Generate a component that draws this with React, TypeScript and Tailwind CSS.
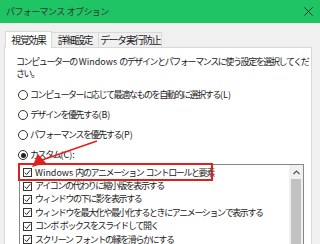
import React from "react";

const F = { fontFamily: '"Noto Sans CJK JP", "Noto Sans", sans-serif' };

function T({ s }: { s: string }) {
  const parts = s.split(/([\x20-\x7e]+)/).filter((p) => p.length > 0);
  return (
    <>
      {parts.map((p, i) =>
        /^[\x20-\x7e]+$/.test(p) ? (
          <span key={i} className="tracking-[0px] whitespace-pre">
            {p}
          </span>
        ) : (
          <span key={i}>{p}</span>
        )
      )}
    </>
  );
}

function Radio({ checked, label }: { checked?: boolean; label: string }) {
  return (
    <div className="flex items-center h-[20px] pl-[2px]">
      <span className="w-[10px] h-[10px] rounded-full border border-[#333] bg-white flex items-center justify-center shrink-0">
        {checked && <span className="w-[5px] h-[5px] rounded-full bg-[#222]" />}
      </span>
      <span className="ml-[2px] whitespace-nowrap">
        <T s={label} />
      </span>
    </div>
  );
}

function Check({ label }: { label: string }) {
  return (
    <div className="flex items-center h-[13.4px] pl-[2px]">
      <span className="w-[9px] h-[9px] border border-[#333] bg-white flex items-center justify-center shrink-0">
        <svg width="7" height="7" viewBox="0 0 7 7">
          <path d="M0.8 3.6 L2.7 5.5 L6.2 1.2" stroke="#222" strokeWidth="1" fill="none" />
        </svg>
      </span>
      <span className="ml-[3px] whitespace-nowrap">
        <T s={label} />
      </span>
    </div>
  );
}

export default function App() {
  const items = [
    "Windows 内のアニメーション コントロールと要素",
    "アイコンの代わりに縮小版を表示する",
    "ウィンドウの下に影を表示する",
    "ウィンドウを最大化や最小化するときにアニメーションで表示する",
    "コンボ ボックスをスライドして開く",
    "スクリーン フォントの縁を滑らかにする",
  ];
  return (
    <div
      className="relative w-[320px] h-[244px] overflow-hidden bg-[#f0f0f0] flex flex-col text-[9px] tracking-[-1.4px] text-[#1a1a1a] leading-[12px]"
      style={F}
    >
      <div className="h-[23px] bg-[#1fc465] flex items-center justify-between pl-[6px] pr-[7px] shrink-0">
        <span className="text-[9px] tracking-[-0.6px] text-[#2a3a30] whitespace-nowrap">
          <T s="パフォーマンス オプション" />
        </span>
        <svg width="9" height="9" viewBox="0 0 9 9">
          <path d="M0.5 0.5 L8.5 8.5 M8.5 0.5 L0.5 8.5" stroke="#1a2a20" strokeWidth="1" />
        </svg>
      </div>
      <div className="h-[24px] flex items-end pl-[5px] shrink-0">
        <div className="h-[17px] w-[47px] bg-white border border-b-0 border-[#d9d9d9] flex items-center justify-center text-[10px] relative top-[1px] z-10 whitespace-nowrap">
          視覚効果
        </div>
        <div className="h-[15px] w-[47px] border-t border-r border-[#d9d9d9] flex items-center justify-center text-[10px] whitespace-nowrap">
          詳細設定
        </div>
        <div className="h-[15px] w-[63px] border-t border-r border-[#d9d9d9] flex items-center justify-center text-[10px] whitespace-nowrap">
          データ実行防止
        </div>
      </div>
      <div className="ml-[4px] w-[308px] flex-1 bg-white border border-[#d9d9d9] pl-[11px] pt-[8px] flex flex-col">
        <div className="leading-[12px]">
          <div className="whitespace-nowrap">
            <T s="コンピューターの Windows のデザインとパフォーマンスに使う設定を選択してくだ" />
          </div>
          <div>さい。</div>
        </div>
        <div className="mt-[5px] flex flex-col">
          <Radio label="コンピューターに応じて最適なものを自動的に選択する(L)" />
          <Radio label="デザインを優先する(B)" />
          <Radio label="パフォーマンスを優先する(P)" />
          <Radio checked label="カスタム(C):" />
        </div>
        <div className="ml-[3px] w-[285px] flex-1 border border-[#828790] flex -mt-[1px]">
          <div className="flex-1 pt-[1px] pl-[1px] flex flex-col">
            {items.map((t) => (
              <Check key={t} label={t} />
            ))}
          </div>
          <div className="w-[14px] bg-[#f0f0f0] flex flex-col items-center">
            <div className="h-[14px] flex items-center justify-center">
              <svg width="7" height="5" viewBox="0 0 7 5">
                <path d="M0.5 4 L3.5 1 L6.5 4" stroke="#555" strokeWidth="1.2" fill="none" />
              </svg>
            </div>
            <div className="w-[10px] flex-1 bg-[#c2c2c2]" />
          </div>
        </div>
      </div>
      <div className="absolute left-[18px] top-[163px] w-[195px] h-[18px] border-2 border-[#e0201e]" />
      <svg className="absolute left-0 top-0" width="320" height="244" viewBox="0 0 320 244">
        <line x1="97" y1="141" x2="42" y2="160" stroke="#e0201e" strokeWidth="1.6" />
        <polygon points="32,167 38,154 46,163" fill="#e0201e" />
      </svg>
    </div>
  );
}
